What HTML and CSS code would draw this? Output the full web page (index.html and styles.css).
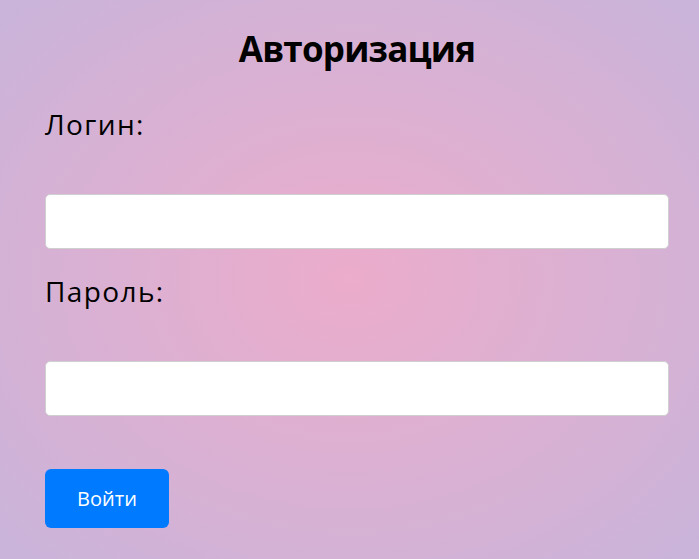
FILE: index.html
```html
<!DOCTYPE html>
<html lang="ru">
<head>
<meta charset="utf-8">
<title>Авторизация</title>
<link rel="stylesheet" href="styles.css">
</head>
<body>
<main class="page">
  <h1 class="title">Авторизация</h1>
  <form class="form">
    <label class="label" for="login">Логин:</label>
    <input class="field" id="login" type="text">
    <label class="label" for="password">Пароль:</label>
    <input class="field" id="password" type="password">
    <button class="submit" type="button">Войти</button>
  </form>
</main>
</body>
</html>
```
FILE: styles.css
```css
html, body {
  margin: 0;
  height: 100%;
}
body {
  background: radial-gradient(ellipse at 50% 50%, #ecaccb 0%, #dcb0d2 45%, #c9b4da 100%);
  font-family: "Open Sans", "DejaVu Sans", sans-serif;
  color: #000;
}
.page {
  padding: 24px 30px 0 45px;
}
.title {
  margin: 0;
  text-align: center;
  font-size: 35px;
  line-height: 50px;
  font-weight: 700;
  letter-spacing: -0.8px;
}
.form {
  display: flex;
  flex-direction: column;
  align-items: flex-start;
  margin-top: 30px;
}
.label {
  font-size: 28px;
  line-height: 40px;
  letter-spacing: 1.4px;
  margin-bottom: 50px;
}
.field {
  box-sizing: border-box;
  width: 100%;
  height: 55px;
  border: 1px solid #cfcfcf;
  border-radius: 5px;
  background: #fff;
  margin: 0 0 22px 0;
  padding: 0 10px;
  font-size: 20px;
}
.submit {
  margin-top: 31px;
  width: 124px;
  height: 59px;
  border: none;
  border-radius: 6px;
  background: #007bff;
  color: #fff;
  font-family: inherit;
  font-size: 20px;
  cursor: pointer;
}
```
